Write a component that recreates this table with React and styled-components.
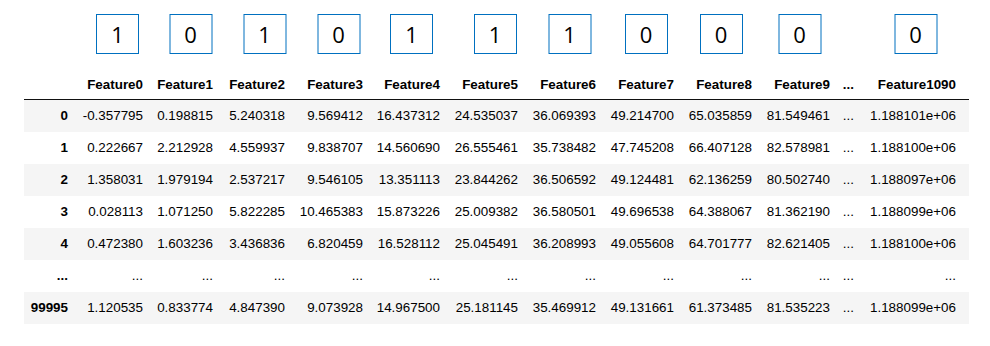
import React from 'react'
import styled, { createGlobalStyle } from 'styled-components'

const GlobalStyle = createGlobalStyle`
  html, body {
    margin: 0;
    padding: 0;
    background: #fff;
  }
  body {
    font-family: 'Liberation Sans', Arial, sans-serif;
  }
`

// column widths: index, Feature0..Feature9, ellipsis, Feature1090
const widths = [51, 75, 70, 72, 78, 77, 78, 78, 78, 78, 78, 24, 108]
const template = widths.map(w => `${w}px`).join(' ')

const columns = [
  'Feature0', 'Feature1', 'Feature2', 'Feature3', 'Feature4',
  'Feature5', 'Feature6', 'Feature7', 'Feature8', 'Feature9', '...', 'Feature1090'
]

// label bits above the columns, nudge = offset from column centre
const bits = [
  { v: 1, nudge: 5 }, { v: 0, nudge: 5.5 }, { v: 1, nudge: 8.5 }, { v: 0, nudge: 7.5 },
  { v: 1, nudge: 3 }, { v: 1, nudge: 9 }, { v: 1, nudge: 5.5 }, { v: 0, nudge: 4 },
  { v: 0, nudge: 1 }, { v: 0, nudge: 1.5 }, null, { v: 0, nudge: 0.5 }
]

const rows = [
  ['0', '-0.357795', '0.198815', '5.240318', '9.569412', '16.437312', '24.535037', '36.069393', '49.214700', '65.035859', '81.549461', '...', '1.188101e+06'],
  ['1', '0.222667', '2.212928', '4.559937', '9.838707', '14.560690', '26.555461', '35.738482', '47.745208', '66.407128', '82.578981', '...', '1.188100e+06'],
  ['2', '1.358031', '1.979194', '2.537217', '9.546105', '13.351113', '23.844262', '36.506592', '49.124481', '62.136259', '80.502740', '...', '1.188097e+06'],
  ['3', '0.028113', '1.071250', '5.822285', '10.465383', '15.873226', '25.009382', '36.580501', '49.696538', '64.388067', '81.362190', '...', '1.188099e+06'],
  ['4', '0.472380', '1.603236', '3.436836', '6.820459', '16.528112', '25.045491', '36.208993', '49.055608', '64.701777', '82.621405', '...', '1.188100e+06'],
  ['...', '...', '...', '...', '...', '...', '...', '...', '...', '...', '...', '...', '...'],
  ['99995', '1.120535', '0.833774', '4.847390', '9.073928', '14.967500', '25.181145', '35.469912', '49.131661', '61.373485', '81.535223', '...', '1.188099e+06']
]

export default function App () {
  return (
    <Page>
      <GlobalStyle />
      <BitRow>
        <span />
        {bits.map((b, i) =>
          <BitCell key={i}>
            {b && <Bit $nudge={b.nudge}>{b.v}</Bit>}
          </BitCell>
        )}
      </BitRow>
      <Frame>
        <colgroup>
          {widths.map((w, i) => <col key={i} style={{ width: w }} />)}
        </colgroup>
        <thead>
          <tr>
            <HeadCell />
            {columns.map((c, i) =>
              <HeadCell key={c} $last={i === columns.length - 1}>{c}</HeadCell>
            )}
          </tr>
        </thead>
        <tbody>
          {rows.map((r, ri) =>
            <Row key={ri} $striped={ri % 2 === 0}>
              <IndexCell>{r[0]}</IndexCell>
              {r.slice(1).map((v, ci) =>
                <Cell key={ci} $last={ci === r.length - 2}>{v}</Cell>
              )}
            </Row>
          )}
        </tbody>
      </Frame>
    </Page>
  )
}

const Page = styled.div`
  width: 990px;
  height: 346px;
  padding: 14px 0 0 24px;
  box-sizing: border-box;
  overflow: hidden;
`

const BitRow = styled.div`
  display: grid;
  grid-template-columns: ${template};
  height: 40px;
  margin-bottom: 13px;
`

const BitCell = styled.div`
  display: flex;
  justify-content: center;
`

const Bit = styled.div`
  width: 43px;
  height: 40px;
  box-sizing: border-box;
  border: 1.5px solid #0070c0;
  display: flex;
  align-items: center;
  justify-content: center;
  font-family: 'Open Sans', 'Liberation Sans', sans-serif;
  font-size: 22px;
  color: #000;
  transform: translateX(${p => p.$nudge}px);
`

const Frame = styled.table`
  table-layout: fixed;
  border-collapse: collapse;
  border-spacing: 0;
  width: 945px;
  font-size: 13.4px;
  color: #000;
`

const HeadCell = styled.th`
  height: 32px;
  padding: 0 ${p => (p.$last ? 13 : 7)}px 6px 0;
  box-sizing: border-box;
  vertical-align: bottom;
  text-align: right;
  font-weight: bold;
  line-height: 16px;
  white-space: nowrap;
  border-bottom: 1px solid #111;
`

const Row = styled.tr`
  background: ${p => (p.$striped ? '#f5f5f5' : '#fff')};
`

const IndexCell = styled.th`
  height: 32px;
  padding: 0 7px 0 0;
  text-align: right;
  font-weight: bold;
  vertical-align: middle;
  white-space: nowrap;
`

const Cell = styled.td`
  height: 32px;
  padding: 0 ${p => (p.$last ? 13 : 7)}px 0 0;
  text-align: right;
  vertical-align: middle;
  white-space: nowrap;
`
